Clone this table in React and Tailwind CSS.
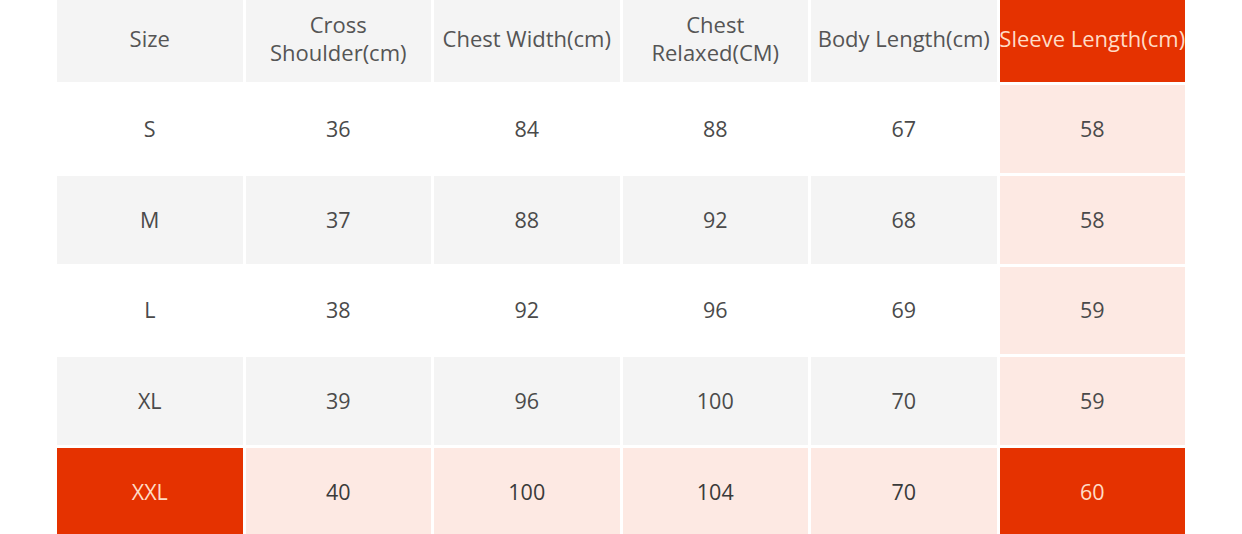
import React from 'react'

const headers = ['Size', 'Cross Shoulder(cm)', 'Chest Width(cm)', 'Chest Relaxed(CM)', 'Body Length(cm)', 'Sleeve Length(cm)']

const rows = [
  ['S', '36', '84', '88', '67', '58'],
  ['M', '37', '88', '92', '68', '58'],
  ['L', '38', '92', '96', '69', '59'],
  ['XL', '39', '96', '100', '70', '59'],
  ['XXL', '40', '100', '104', '70', '60'],
]

const headerLines = {
  'Cross Shoulder(cm)': ['Cross', 'Shoulder(cm)'],
  'Chest Relaxed(CM)': ['Chest', 'Relaxed(CM)'],
}

function cellBg(r, c) {
  const last = r === rows.length - 1
  if (last) return c === 0 || c === 5 ? 'bg-[#e53200] text-[#ffdcc6]' : 'bg-[#fde9e3] text-[#3a3a3a]'
  if (c === 5) return 'bg-[#fde9e3] text-[#4a4a4a]'
  return r % 2 === 1 ? 'bg-[#f4f4f4] text-[#4a4a4a]' : 'bg-white text-[#4a4a4a]'
}

export default function App() {
  return (
    <div className="w-[1242px] h-[534px] overflow-hidden bg-white font-['Open_Sans',sans-serif]">
      <div className="ml-[57px] w-[1128px] grid grid-cols-6 gap-[3px]">
        {headers.map((h, i) => (
          <div
            key={h}
            className={`h-[82px] pb-[6px] flex flex-col items-center justify-center text-[22px] leading-[28px] whitespace-nowrap overflow-hidden
              ${i === 5 ? 'bg-[#e53200] text-[#ffdcc6]' : 'bg-[#f4f4f4] text-[#555]'}`}
          >
            {(headerLines[h] || [h]).map((l) => <span key={l}>{l}</span>)}
          </div>
        ))}
        {rows.map((row, r) =>
          row.map((v, c) => (
            <div
              key={r + '-' + c}
              className={`h-[87.75px] flex items-center justify-center text-[21.5px] ${cellBg(r, c)}`}
            >
              {v}
            </div>
          ))
        )}
      </div>
    </div>
  )
}
